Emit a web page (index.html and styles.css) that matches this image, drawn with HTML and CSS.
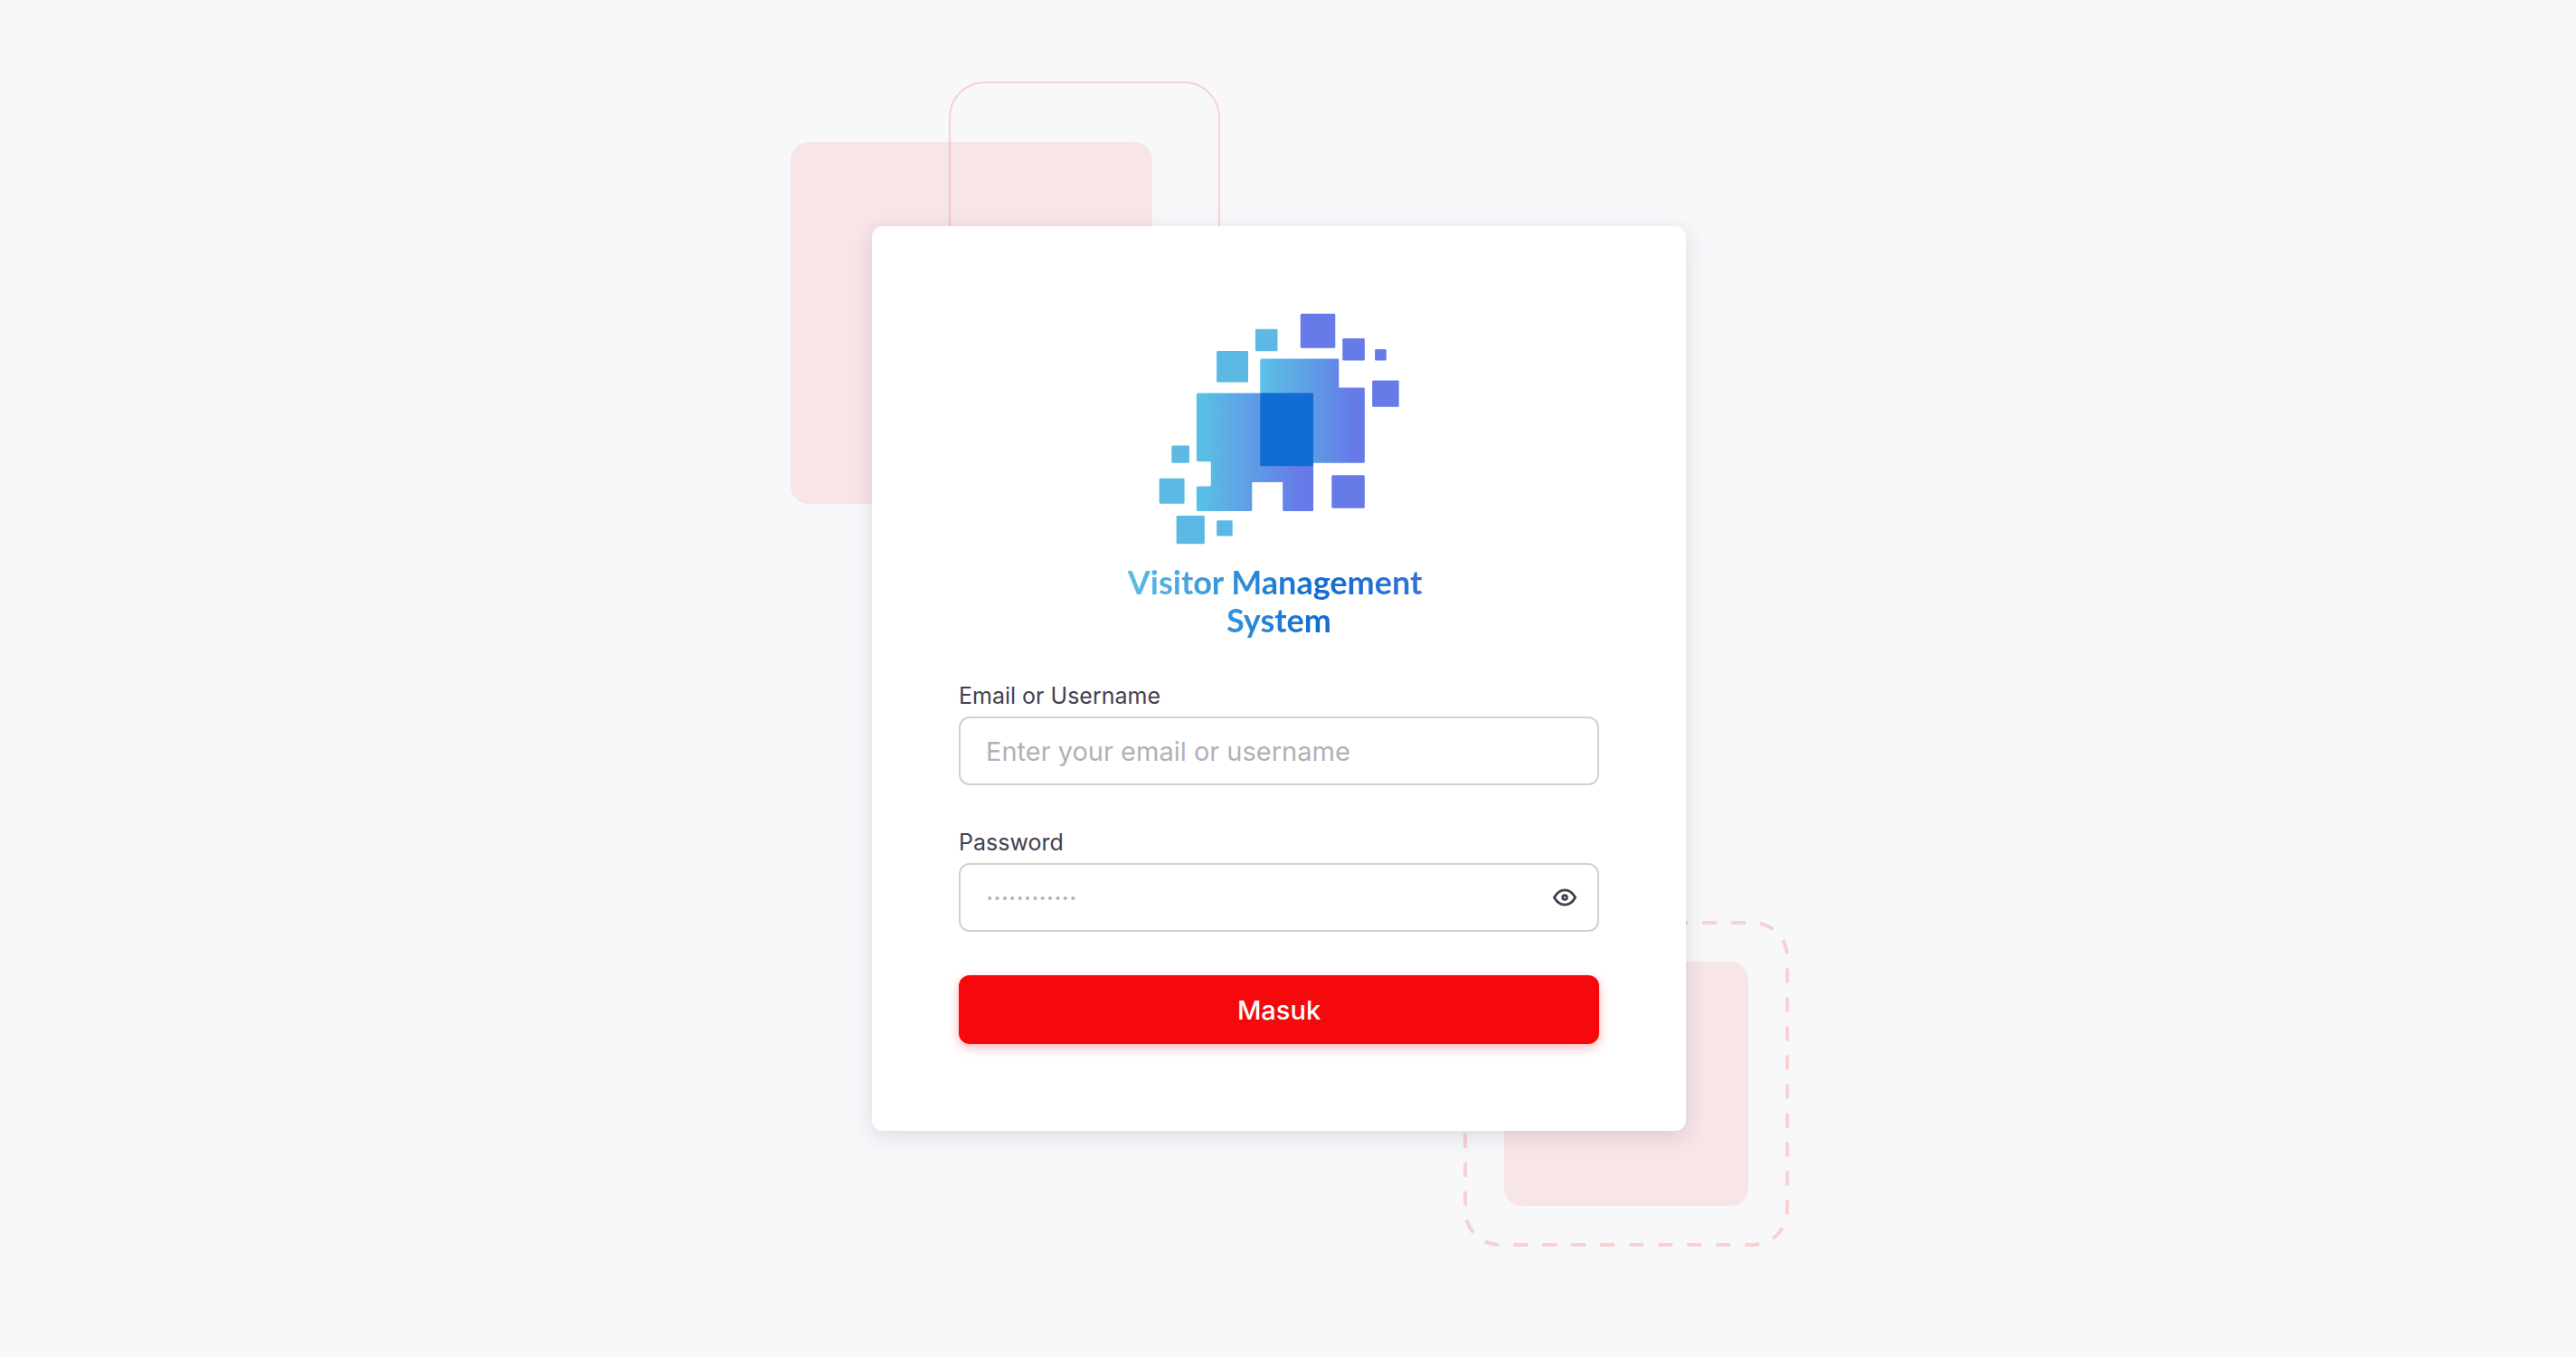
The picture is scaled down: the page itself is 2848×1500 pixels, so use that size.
FILE: index.html
```html
<!DOCTYPE html>
<html lang="id">
<head>
<meta charset="utf-8">
<meta name="viewport" content="width=device-width, initial-scale=1">
<title>Visitor Management System</title>
<link rel="stylesheet" href="styles.css">
</head>
<body>
<main class="page">
  <div class="login">
    <span class="shape shape-top"></span>
    <span class="shape shape-outline"></span>
    <span class="shape shape-bottom"></span>
    <svg class="shape shape-dashed" viewBox="0 0 360 360" aria-hidden="true">
      <path d="M40 2H320A38 38 0 0 1 358 40V320A38 38 0 0 1 320 358H40A38 38 0 0 1 2 320V40A38 38 0 0 1 40 2"/>
    </svg>
    <section class="card">
      <svg class="logo" viewBox="180 77 801 768" aria-hidden="true">
        <defs>
          <linearGradient id="tile"><stop offset="0" stop-color="#5ac2e4"/><stop offset=".5" stop-color="#5f9be6"/><stop offset=".9" stop-color="#667ae9"/></linearGradient>
        </defs>
        <g fill="#5bb9e4">
          <rect x="502" y="129" width="74" height="74" rx="4"/>
          <rect x="373" y="202" width="105" height="104" rx="4"/>
          <rect x="223" y="517" width="59" height="58" rx="4"/>
          <rect x="182" y="626" width="84" height="84" rx="4"/>
          <rect x="239" y="750" width="94" height="94" rx="4"/>
          <rect x="373" y="766" width="53" height="52" rx="4"/>
        </g>
        <g fill="#667ae8">
          <rect x="652" y="78" width="116" height="114" rx="4"/>
          <rect x="792" y="160" width="74" height="74" rx="4"/>
          <rect x="900" y="196" width="38" height="38" rx="3"/>
          <rect x="891" y="300" width="89" height="88" rx="4"/>
          <rect x="756" y="615" width="110" height="110" rx="4"/>
        </g>
        <path fill="url(#tile)" d="M523 228H776Q780 228 780 232V324H862Q866 324 866 328V571Q866 575 862 575H518V233Q518 228 523 228Z"/>
        <path fill="url(#tile)" d="M311 342H691Q695 342 695 346V731Q695 735 691 735H598Q593 735 593 731V639H494Q491 639 491 642V731Q491 735 487 735H311Q306 735 306 731V656Q306 652 310 652H350Q354 652 354 648V573Q354 570 350 570H311Q306 570 306 566V347Q306 342 311 342Z"/>
        <rect fill="#116dd1" x="518" y="342" width="177" height="243" rx="4"/>
      </svg>
      <h1 class="brand">Visitor Management 
System</h1>
      <form class="form">
        <div class="field">
          <label for="user">Email or Username</label>
          <input class="input" id="user" type="text" placeholder="Enter your email or username">
        </div>
        <div class="field">
          <label for="password">Password</label>
          <div class="input password">
            <input class="password-input" id="password" type="password" placeholder="············">
            <button class="toggle" type="button" aria-label="Show password">
              <svg viewBox="0 0 24 24" aria-hidden="true"><circle cx="12" cy="12" r="2"/><path d="M22 12c-2.667 4.667-6 7-10 7s-7.333-2.333-10-7c2.667-4.667 6-7 10-7s7.333 2.333 10 7"/></svg>
            </button>
          </div>
        </div>
        <button class="submit" type="submit">Masuk</button>
      </form>
    </section>
  </div>
</main>
</body>
</html>
```
FILE: styles.css
```css
* { box-sizing: border-box; }

body {
  margin: 0;
  background: #f8f8fb;
  color: #444050;
  font-family: Inter, "Liberation Sans", sans-serif;
}

.page {
  display: flex;
  align-items: center;
  justify-content: center;
  min-height: 100vh;
  padding: 160px 20px 160px 0;
}

.login {
  position: relative;
  width: 100%;
  max-width: 900px;
}

.shape { position: absolute; }

.shape-top {
  top: -93px;
  left: -90px;
  width: 400px;
  height: 400px;
  border-radius: 20px;
  background: rgba(245, 9, 13, 0.08);
}

.shape-outline {
  top: -160px;
  left: 85px;
  width: 300px;
  height: 300px;
  border: 2px solid rgba(245, 9, 13, 0.16);
  border-radius: 40px;
}

.shape-bottom {
  right: -69px;
  bottom: -83px;
  width: 270px;
  height: 270px;
  border-radius: 20px;
  background: rgba(245, 9, 13, 0.08);
}

.shape-dashed {
  right: -114px;
  bottom: -128px;
  width: 360px;
  height: 360px;
  fill: none;
  stroke: rgba(245, 9, 13, 0.16);
  stroke-width: 4;
  stroke-dasharray: 16 16;
}

.card {
  position: relative;
  display: flex;
  flex-direction: column;
  align-items: center;
  padding: 96px;
  border-radius: 12px;
  background: #fff;
  box-shadow: 0 6px 24px rgba(47, 43, 61, 0.14);
}

.logo {
  width: 266px;
  height: 256px;
}

.brand {
  margin: 20px 0 42px;
  background: linear-gradient(90deg, #5bbfe5 0%, #116dd1 62%, #3f73dc 108%);
  background-clip: text;
  color: transparent;
  font-family: Lato, "Open Sans", sans-serif;
  font-size: 36px;
  font-weight: 700;
  line-height: 42px;
  text-align: center;
  white-space: pre;
}

.form {
  display: flex;
  flex-direction: column;
  gap: 42px;
  width: 100%;
}

.field {
  display: flex;
  flex-direction: column;
  gap: 2px;
}

.field label {
  font-size: 25px;
  line-height: 42px;
}

.input {
  width: 100%;
  height: 76px;
  padding: 0 28px;
  border: 2px solid #d1d0d5;
  border-radius: 12px;
  background: #fff;
  color: #444050;
  font: inherit;
  font-size: 29px;
}

.password {
  display: flex;
  align-items: center;
  padding-right: 22px;
}

.password-input {
  flex: 1;
  min-width: 0;
  padding: 0;
  border: 0;
  background: none;
  color: inherit;
  font: inherit;
}

input::placeholder {
  color: #b2b0b7;
  opacity: 1;
}

.toggle {
  display: flex;
  padding: 0;
  border: 0;
  background: none;
  color: #444050;
}

.toggle svg {
  width: 28px;
  height: 28px;
  fill: none;
  stroke: currentColor;
  stroke-width: 2.4;
  stroke-linecap: round;
  stroke-linejoin: round;
}

.submit {
  height: 76px;
  margin-top: 6px;
  border: 0;
  border-radius: 12px;
  background: #f5090d;
  box-shadow: 0 4px 12px rgba(245, 9, 13, 0.3);
  color: #fff;
  font: inherit;
  font-size: 29px;
  font-weight: 500;
}
```
